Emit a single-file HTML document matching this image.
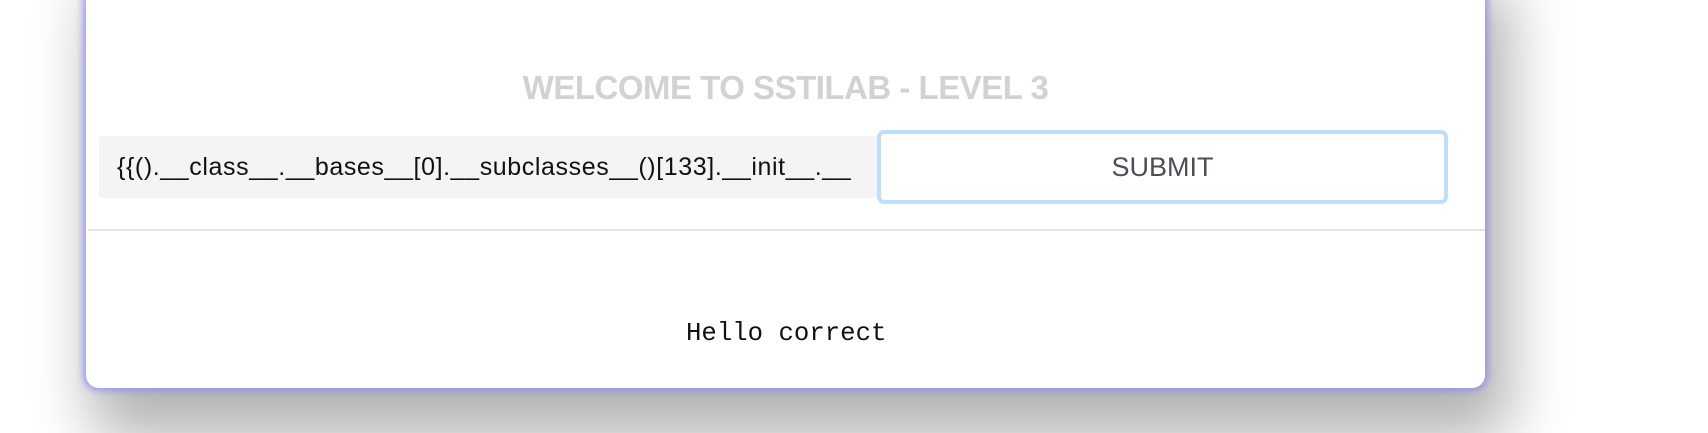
<!DOCTYPE html>
<html><head><style>
html,body{margin:0;padding:0;width:1708px;height:433px;overflow:hidden;background:#fff;}
.card{position:absolute;left:86px;top:-40px;width:1399px;height:428px;background:#fff;border-radius:0 0 13px 13px;
box-shadow:0 0 7px 3px rgba(140,140,235,0.8),15px 40px 60px 10px rgba(0,0,0,0.3);}
.title{position:absolute;left:0;width:1399px;top:108px;text-align:center;font-family:"Liberation Sans",sans-serif;font-weight:bold;font-size:33px;line-height:40px;color:#d2d2d2;letter-spacing:-0.5px;}
.inp{position:absolute;left:13px;top:176px;width:778px;height:62px;background:#f4f4f4;border-radius:4px;overflow:hidden;white-space:nowrap;font-family:"Liberation Sans",sans-serif;font-size:25px;line-height:62px;color:#111;padding-left:18px;box-sizing:border-box;}
.inp span{display:inline-block;width:735px;overflow:hidden;letter-spacing:0.6px;}
.btn{position:absolute;left:791px;top:170px;width:571px;height:74px;border:4px solid #bfdefd;border-radius:7px;box-sizing:border-box;text-align:center;font-family:"Liberation Sans",sans-serif;font-size:27px;line-height:66px;color:#4a4f57;}
.hr{position:absolute;left:2px;right:0;top:269px;height:2px;background:#e4e4e4;}
.hello{position:absolute;left:600px;top:359px;font-family:"Liberation Mono",monospace;font-size:25.7px;line-height:30px;color:#111;}
</style></head><body>
<div class="card">
<div class="title">WELCOME TO SSTILAB - LEVEL 3</div>
<div class="inp"><span>{{().__class__.__bases__[0].__subclasses__()[133].__init__.__globals__}}</span></div>
<div class="btn">SUBMIT</div>
<div class="hr"></div>
<div class="hello">Hello correct</div>
</div>
</body></html>
